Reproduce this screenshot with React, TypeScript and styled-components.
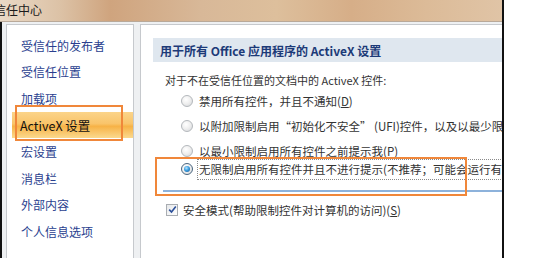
import React from "react";
import styled, { createGlobalStyle } from "styled-components";

const GlobalStyle = createGlobalStyle`
  html, body {
    margin: 0;
    padding: 0;
    background: #ffffff;
  }
  body {
    font-family: "Noto Sans CJK SC", "Noto Sans", sans-serif;
  }
`;

const Window = styled.div`
  position: relative;
  width: 504px;
  height: 258px;
  overflow: hidden;
  box-sizing: border-box;
  border-right: 2px solid #111;
  display: flex;
  flex-direction: column;
`;

const TitleBar = styled.div`
  height: 21px;
  flex: 0 0 21px;
  display: flex;
  align-items: center;
  background: linear-gradient(
    to right,
    #ead9c6 0%,
    #dcc2a6 12%,
    #cfa47e 22%,
    #d8b898 40%,
    #ddbf9c 55%,
    #d6ae88 70%,
    #dcbb98 85%,
    #e0c4a6 100%
  );
  border-bottom: 1px solid #b9a999;
  font-size: 12px;
  color: #1a1a1a;
  white-space: nowrap;
`;

const TitleText = styled.span`
  margin-left: -6px;
  margin-top: -2px;
`;

const Body = styled.div`
  flex: 1;
  display: flex;
  gap: 6px;
  padding: 2px 0 0 4px;
  background: #eef0f2;
  border-left: 2px solid #111;
  min-height: 0;
`;

const NavPanel = styled.div`
  width: 128px;
  flex: 0 0 128px;
  background: #fff;
  border: 1px solid #c6c9cd;
  border-bottom: none;
  padding: 7px 0 0 5px;
  box-sizing: border-box;
`;

const NavItem = styled.div<{ $active?: boolean }>`
  height: 26.6px;
  display: flex;
  align-items: center;
  padding-left: ${({ $active }) => ($active ? "8px" : "9px")};
  font-size: ${({ $active }) => ($active ? "12.5px" : "12px")};
  color: ${({ $active }) => ($active ? "#111" : "#2a3f8f")};
  white-space: nowrap;
  background: ${({ $active }) =>
    $active
      ? "linear-gradient(to bottom, #fbd48a 0%, #f9c46a 45%, #f7b246 55%, #fbd98e 100%)"
      : "transparent"};
`;

const ContentPanel = styled.div`
  flex: 1;
  background: #fff;
  border: 1px solid #c6c9cd;
  border-bottom: none;
  border-right: none;
  padding-top: 13px;
  min-width: 0;
  overflow: hidden;
`;

const SectionHeader = styled.div`
  margin-left: 12px;
  height: 24px;
  display: flex;
  align-items: center;
  padding-left: 7px;
  background: #dfe7ef;
  font-size: 12px;
  font-weight: bold;
  color: #1c3a78;
  white-space: nowrap;
`;

const Lead = styled.div`
  margin: 9px 0 0 24px;
  height: 17px;
  display: flex;
  align-items: center;
  font-size: 11px;
  color: #333;
  white-space: nowrap;
`;

const OptionList = styled.div`
  margin: 0 0 0 40px;
  display: flex;
  flex-direction: column;
`;

const OptionRow = styled.div<{ $focused?: boolean }>`
  height: ${({ $focused }) => ($focused ? "22px" : "25px")};
  margin-top: ${({ $focused }) => ($focused ? "-5px" : "0")};
  display: flex;
  align-items: center;
  gap: 6px;
  font-size: 11.5px;
  color: #333;
  white-space: nowrap;
`;

const Radio = styled.span<{ $checked?: boolean }>`
  position: relative;
  width: 12px;
  height: 12px;
  flex: 0 0 12px;
  border-radius: 50%;
  box-sizing: border-box;
  border: 1px solid ${({ $checked }) => ($checked ? "#4a6680" : "#b4b8bc")};
  background: radial-gradient(circle at 40% 35%, #ffffff 0%, #f0f0f0 45%, #d2d5d8 100%);

  &::after {
    content: "";
    display: ${({ $checked }) => ($checked ? "block" : "none")};
    position: absolute;
    left: 2px;
    top: 2px;
    width: 6px;
    height: 6px;
    border-radius: 50%;
    background: radial-gradient(circle at 40% 35%, #b8e4ff 0%, #3a9ee0 45%, #14508e 100%);
  }
`;

const FocusLabel = styled.span`
  display: inline-flex;
  align-items: center;
  height: 21px;
  box-sizing: border-box;
  border: 1px dotted #8a8a8a;
  padding: 0 40px 0 1px;
  margin-left: -2px;
`;

const Divider = styled.div`
  margin: 10px 0 0 22px;
  height: 2px;
  background: #8db2db;
`;

const CheckRow = styled.div`
  margin: 9px 0 0 25px;
  height: 17px;
  display: flex;
  align-items: center;
  gap: 5px;
  font-size: 11.5px;
  color: #333;
  white-space: nowrap;
`;

const CheckBox = styled.span`
  width: 12px;
  height: 12px;
  flex: 0 0 12px;
  box-sizing: border-box;
  border: 1px solid #a9adb2;
  background: linear-gradient(to bottom right, #e6e8ea, #ffffff);
  display: flex;
  align-items: center;
  justify-content: center;
`;

const Underline = styled.span`
  text-decoration: underline;
`;

const Annotation = styled.div<{ $x: number; $y: number; $w: number; $h: number }>`
  position: absolute;
  left: ${({ $x }) => $x}px;
  top: ${({ $y }) => $y}px;
  width: ${({ $w }) => $w}px;
  height: ${({ $h }) => $h}px;
  box-sizing: border-box;
  border: 2px solid #f0873a;
  pointer-events: none;
`;

const navItems = [
  "受信任的发布者",
  "受信任位置",
  "加载项",
  "ActiveX 设置",
  "宏设置",
  "消息栏",
  "外部内容",
  "个人信息选项",
];

const options: { text: React.ReactNode; checked?: boolean }[] = [
  {
    text: (
      <>
        禁用所有控件，并且不通知(<Underline>D</Underline>)
      </>
    ),
  },
  {
    text: <>以附加限制启用“初始化不安全” (UFI)控件，以及以最少限制启用所有其他控件</>,
  },
  {
    text: (
      <>
        以最小限制启用所有控件之前提示我(<Underline>P</Underline>)
      </>
    ),
  },
  {
    text: <>无限制启用所有控件并且不进行提示(不推荐；可能会运行有潜在危险的控件)</>,
    checked: true,
  },
];

export default function App() {
  return (
    <>
      <GlobalStyle />
      <Window>
        <TitleBar>
          <TitleText>信任中心</TitleText>
        </TitleBar>
        <Body>
          <NavPanel>
            {navItems.map((item) => (
              <NavItem key={item} $active={item === "ActiveX 设置"}>
                {item}
              </NavItem>
            ))}
          </NavPanel>
          <ContentPanel>
            <SectionHeader>用于所有 Office 应用程序的 ActiveX 设置</SectionHeader>
            <Lead>对于不在受信任位置的文档中的 ActiveX 控件:</Lead>
            <OptionList>
              {options.map((opt, i) => (
                <OptionRow key={i} $focused={opt.checked}>
                  <Radio $checked={opt.checked} />
                  {opt.checked ? <FocusLabel>{opt.text}</FocusLabel> : <span>{opt.text}</span>}
                </OptionRow>
              ))}
            </OptionList>
            <Divider />
            <CheckRow>
              <CheckBox>
                <svg width="9" height="9" viewBox="0 0 9 9">
                  <path d="M1.2 4.6 L3.5 7 L7.8 1.4" fill="none" stroke="#2b4f9a" strokeWidth="1.6" />
                </svg>
              </CheckBox>
              <span>
                安全模式(帮助限制控件对计算机的访问)(<Underline>S</Underline>)
              </span>
            </CheckRow>
          </ContentPanel>
        </Body>
        <Annotation $x={15} $y={105} $w={108} $h={36} />
        <Annotation $x={155} $y={157} $w={312} $h={39} />
      </Window>
    </>
  );
}
